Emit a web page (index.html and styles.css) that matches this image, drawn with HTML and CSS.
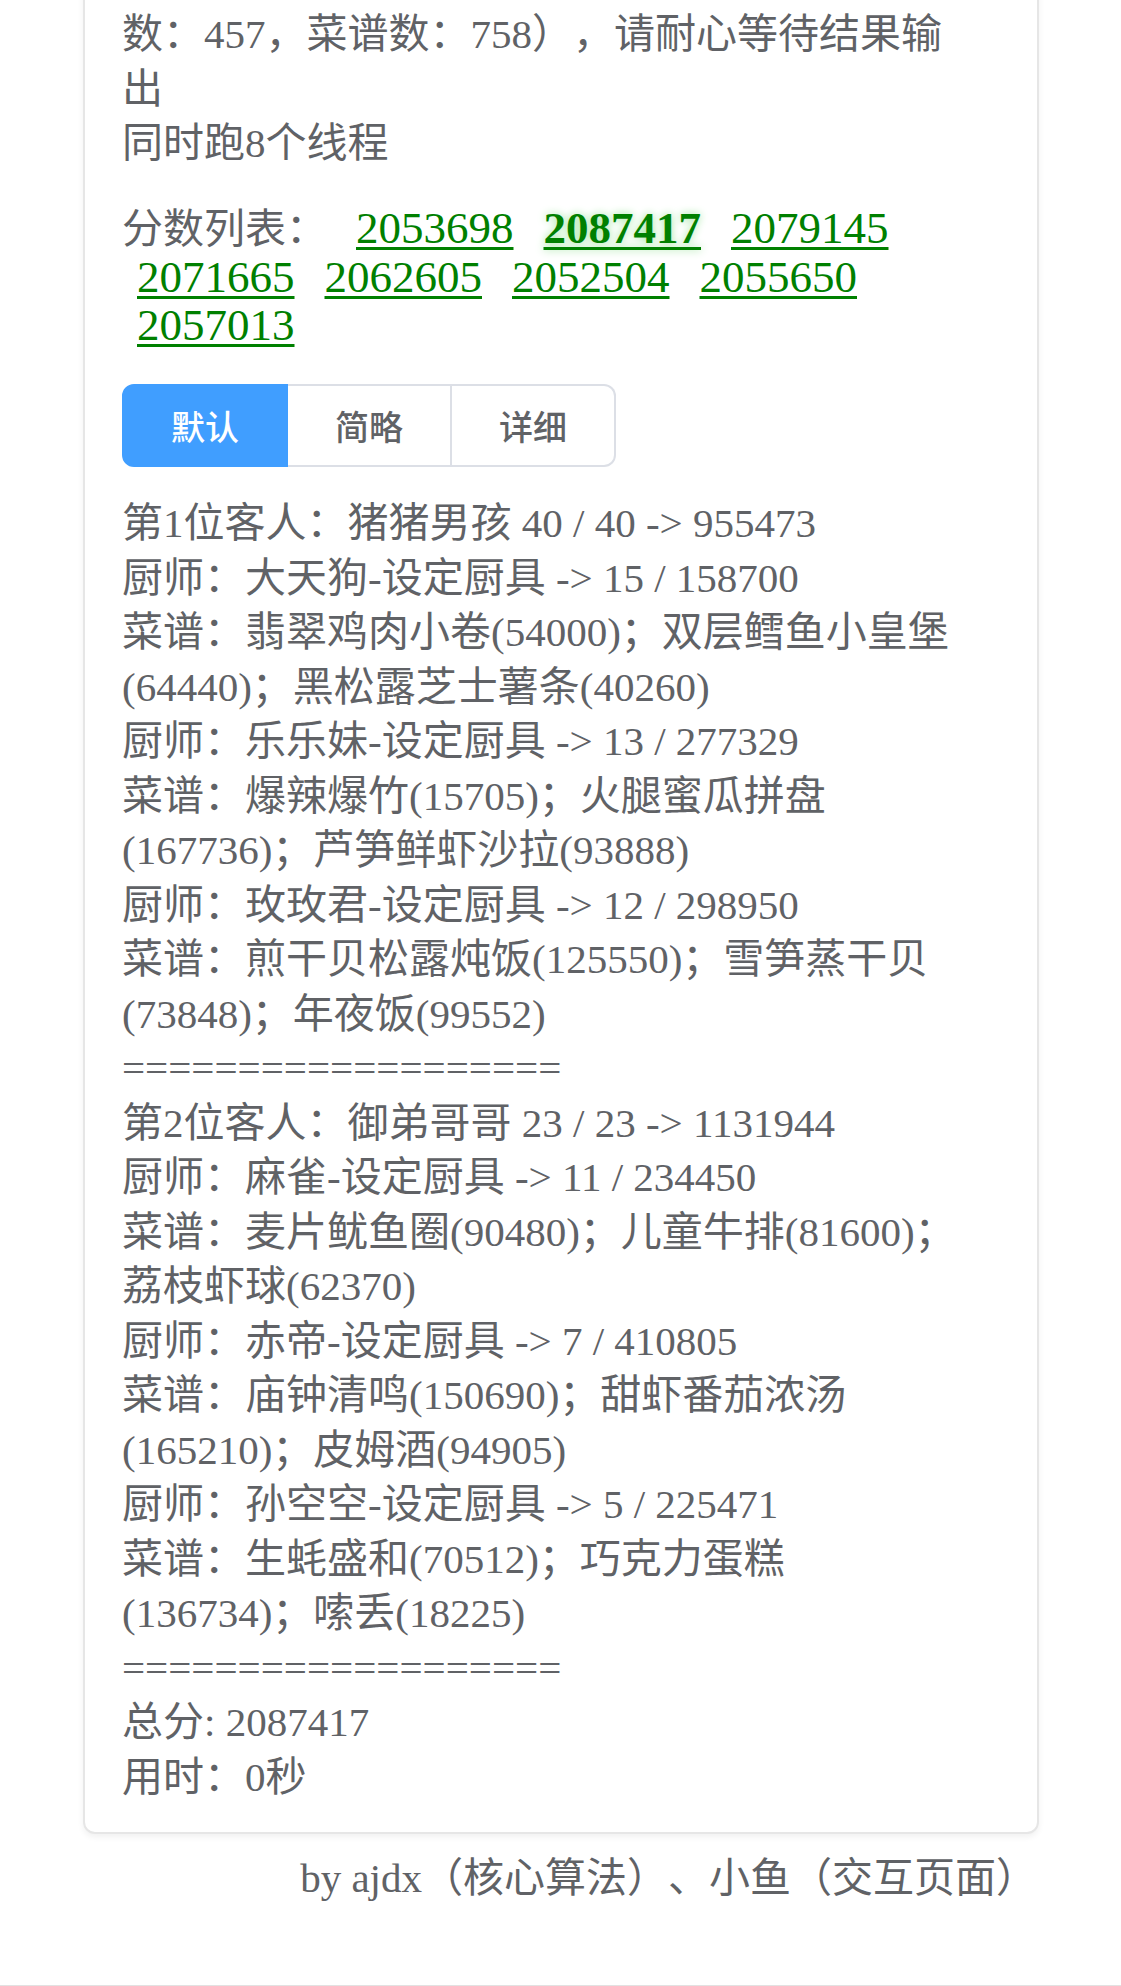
FILE: index.html
```html
<!DOCTYPE html>
<html lang="zh-CN">
<head>
  <meta charset="UTF-8" />
  <title>厨师搭配计算</title>
  <link rel="stylesheet" href="styles.css">
</head>
<body>
  <div class="card">
    <div class="info">
      <div>数：457，菜谱数：758），请耐心等待结果输出</div>
      <div>同时跑8个线程</div>
    </div>

    <div class="scores">
      <span class="scores-label">分数列表：</span>
      <a href="#" class="score">2053698</a><a href="#" class="score best">2087417</a><a href="#" class="score">2079145</a><a href="#" class="score">2071665</a><a href="#" class="score">2062605</a><a href="#" class="score">2052504</a><a href="#" class="score">2055650</a><a href="#" class="score">2057013</a>
    </div>

    <div class="tabs">
      <button class="tab active">默认</button>
      <button class="tab">简略</button>
      <button class="tab">详细</button>
    </div>

    <div class="log">
      <div>第1位客人：猪猪男孩 40 / 40 -&gt; 955473</div>
      <div>厨师：大天狗-设定厨具 -&gt; 15 / 158700</div>
      <div>菜谱：翡翠鸡肉小卷(54000)；双层鳕鱼小皇堡(64440)；黑松露芝士薯条(40260)</div>
      <div>厨师：乐乐妹-设定厨具 -&gt; 13 / 277329</div>
      <div>菜谱：爆辣爆竹(15705)；火腿蜜瓜拼盘(167736)；芦笋鲜虾沙拉(93888)</div>
      <div>厨师：玫玫君-设定厨具 -&gt; 12 / 298950</div>
      <div>菜谱：煎干贝松露炖饭(125550)；雪笋蒸干贝(73848)；年夜饭(99552)</div>
      <div>===================</div>
      <div>第2位客人：御弟哥哥 23 / 23 -&gt; 1131944</div>
      <div>厨师：麻雀-设定厨具 -&gt; 11 / 234450</div>
      <div>菜谱：麦片鱿鱼圈(90480)；儿童牛排(81600)；荔枝虾球(62370)</div>
      <div>厨师：赤帝-设定厨具 -&gt; 7 / 410805</div>
      <div>菜谱：庙钟清鸣(150690)；甜虾番茄浓汤(165210)；皮姆酒(94905)</div>
      <div>厨师：孙空空-设定厨具 -&gt; 5 / 225471</div>
      <div>菜谱：生蚝盛和(70512)；巧克力蛋糕(136734)；嗦丢(18225)</div>
      <div>===================</div>
      <div>总分: 2087417</div>
      <div>用时：0秒</div>
    </div>
  </div>

  <div class="footer">by ajdx（核心算法）、小鱼（交互页面）</div>
  <div class="bottom-bar"></div>
</body>
</html>
```

FILE: styles.css
```css
body {
  margin: 0;
  font-family: 'Liberation Serif', 'Noto Sans CJK SC', serif;
  font-size: 41px;
  line-height: 54.5px;
  color: #606266;
  background: #fff;
  text-spacing-trim: space-all;
}
.card {
  margin: -30px 82px 0 83px;
  padding: 35px 37px 28px;
  border: 2px solid #e6e6e6;
  border-radius: 12px;
  box-shadow: 0 3px 6px rgba(0, 0, 0, 0.06);
  background: #fff;
}
.info, .log {
  max-width: 848px;
}
.scores {
  margin-top: 33.5px;
  display: flex;
  flex-wrap: wrap;
  align-items: baseline;
  line-height: 48px;
}
.scores-label {
  margin-right: 14px;
}
.score {
  margin: 0 15px;
  font-size: 45px;
  color: green;
  text-decoration: underline;
  text-decoration-thickness: 3px;
  text-underline-offset: 4px;
}
.score.best {
  font-weight: bold;
  text-shadow: 0 0 8px #9be39b;
}
.tabs {
  margin-top: 35px;
  display: flex;
}
.tab {
  font-family: 'Noto Sans CJK SC', sans-serif;
  font-size: 34px;
  font-weight: 500;
  line-height: 34px;
  padding: 22.5px 47px;
  color: #606266;
  background: #fff;
  border: 2px solid #dcdfe6;
  border-left: 0;
  cursor: pointer;
}
.tab:first-child {
  border-left: 2px solid #dcdfe6;
  border-radius: 12px 0 0 12px;
}
.tab:last-child {
  border-radius: 0 12px 12px 0;
}
.tab.active {
  color: #fff;
  background: #409eff;
  border-color: #409eff;
}
.log {
  margin-top: 29px;
}
.footer {
  margin-top: 17px;
  padding-right: 84px;
  text-align: right;
}
.bottom-bar {
  margin-top: 79.5px;
  border-top: 2px solid #e2e2e2;
}
```
